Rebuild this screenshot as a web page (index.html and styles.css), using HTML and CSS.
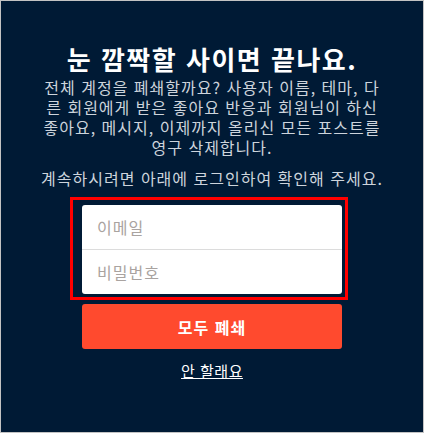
FILE: index.html
```html
<!DOCTYPE html>
<html lang="ko">
<head>
<meta charset="utf-8">
<link rel="stylesheet" href="styles.css">
</head>
<body>
<div class="frame">
  <div class="content">
    <h1 class="title">눈 깜짝할 사이면 끝나요.</h1>
    <p class="desc">전체 계정을 폐쇄할까요? 사용자 이름, 테마, 다른 회원에게 받은 좋아요 반응과 회원님이 하신 좋아요, 메시지, 이제까지 올리신 모든 포스트를 영구 삭제합니다.</p>
    <p class="confirm">계속하시려면 아래에 로그인하여 확인해 주세요.</p>
    <div class="highlight">
      <div class="fields">
        <input class="field" type="email" placeholder="이메일">
        <input class="field" type="password" placeholder="비밀번호">
      </div>
    </div>
    <button class="danger">모두 폐쇄</button>
    <a class="cancel" href="#">안 할래요</a>
  </div>
</div>
</body>
</html>
```
FILE: styles.css
```css
* { box-sizing: border-box; }
html, body { margin: 0; padding: 0; }
body {
  font-family: "Noto Sans CJK KR", "Noto Sans", sans-serif;
}
.frame {
  width: 424px;
  height: 433px;
  border: 1px solid #c3c3c3;
  background: #001a35;
  overflow: hidden;
}
.content {
  display: flex;
  flex-direction: column;
  align-items: center;
  padding-top: 40px;
}
.title {
  margin: 0;
  font-size: 26px;
  line-height: 36px;
  letter-spacing: 1.5px;
  font-weight: 700;
  color: #ffffff;
}
.desc {
  margin: 0;
  width: 340px;
  font-size: 16px;
  line-height: 20px;
  letter-spacing: 1px;
  color: #cdd4dc;
  text-align: center;
}
.confirm {
  margin: 11px 0 0;
  font-size: 16px;
  line-height: 20px;
  letter-spacing: 1px;
  color: #cdd4dc;
  text-align: center;
  white-space: nowrap;
}
.highlight {
  margin-top: 9px;
  width: 278px;
  border: 3px solid #ff0000;
  padding: 5px 3px 3px 9px;
  margin-left: -6px;
}
.fields {
  background: #fff;
  border-radius: 3px;
  display: flex;
  flex-direction: column;
}
.field {
  height: 44px;
  border: 0;
  background: transparent;
  padding: 0 15px;
  font-family: inherit;
  font-size: 16px;
  letter-spacing: 1px;
  color: #333;
  outline: none;
}
.field + .field { border-top: 1px solid #dcdcdc; height: 45px; }
.field::placeholder { color: #a9a3a0; }
.danger {
  margin-top: 4px;
  width: 260px;
  height: 45px;
  border: 0;
  border-radius: 3px;
  background: #ff4a2e;
  color: #fff;
  font-family: inherit;
  font-size: 16px;
  letter-spacing: 1px;
  font-weight: 700;
}
.cancel {
  margin-top: 12px;
  font-size: 15px;
  line-height: 20px;
  letter-spacing: 0.5px;
  color: #fff;
  text-decoration: underline;
}
```
